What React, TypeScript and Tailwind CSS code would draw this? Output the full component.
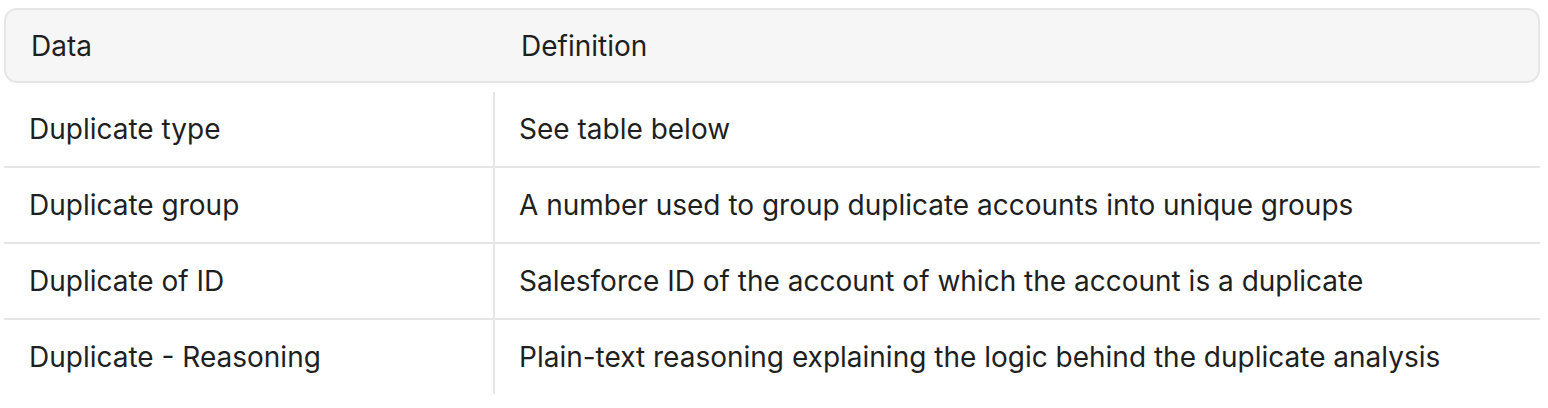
import React from 'react';

type Row = {
  data: string;
  definition: string;
};

const rows: Row[] = [
  { data: 'Duplicate type', definition: 'See table below' },
  { data: 'Duplicate group', definition: 'A number used to group duplicate accounts into unique groups' },
  { data: 'Duplicate of ID', definition: 'Salesforce ID of the account of which the account is a duplicate' },
  {
    data: 'Duplicate - Reasoning',
    definition: 'Plain-text reasoning explaining the logic behind the duplicate analysis',
  },
];

const App: React.FC = () => {
  return (
    <div
      className="w-[1548px] h-[408px] bg-white pl-[4px] pr-[8px] pt-[8px] text-[28px] text-[#1f1f1f]"
      style={{ fontFamily: 'Inter, "Noto Sans", sans-serif' }}
    >
      <div className="grid grid-cols-[489px_1fr] h-[75px] items-center rounded-[13px] border-2 border-[#e6e6e6] bg-[#f6f6f6]">
        <div className="pl-[25px]">Data</div>
        <div className="pl-[26px]">Definition</div>
      </div>

      <div className="mt-[9px]">
        {rows.map((row, i) => (
          <div
            key={row.data}
            className={
              i < rows.length - 1
                ? 'grid grid-cols-[489px_1fr] border-b-2 border-[#e6e6e6]'
                : 'grid grid-cols-[489px_1fr]'
            }
          >
            <div className="h-[74px] flex items-center pl-[25px]">{row.data}</div>
            <div className="h-[74px] flex items-center pl-[24px] border-l-2 border-[#e6e6e6]">
              {row.definition}
            </div>
          </div>
        ))}
      </div>
    </div>
  );
};

export default App;
